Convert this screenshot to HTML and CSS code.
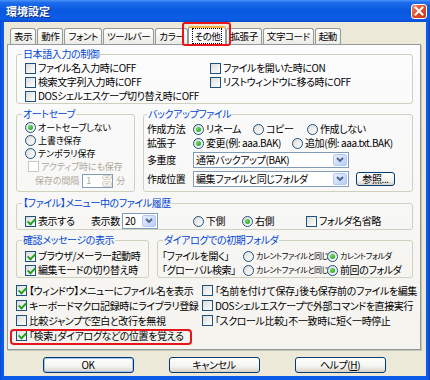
FILE: index.html
```html
<!DOCTYPE html>
<html lang="ja">

<head>
    <meta charset="UTF-8">
    <title>環境設定</title>
    <link rel="stylesheet" href="styles.css">
</head>

<body>
    <div class="window">
        <div class="titlebar">
            <span class="title">環境設定</span>
            <span class="close-btn">
                <svg width="10" height="10" viewBox="0 0 10 10">
                    <path d="M1.5 1.5 L8.5 8.5 M8.5 1.5 L1.5 8.5" stroke="#fff" stroke-width="2" stroke-linecap="square" />
                </svg>
            </span>
        </div>

        <div class="frame">
            <div class="client">
                <!-- Abas -->
                <div class="tabs">
                    <span class="tab">表示</span>
                    <span class="tab">動作</span>
                    <span class="tab">フォント</span>
                    <span class="tab">ツールバー</span>
                    <span class="tab">カラー</span>
                    <span class="tab active"><span class="focus">その他</span></span>
                    <span class="tab">拡張子</span>
                    <span class="tab">文字コード</span>
                    <span class="tab">起動</span>
                </div>

                <div class="panel">
                    <fieldset class="group">
                        <legend>日本語入力の制御</legend>
                        <div class="ime-grid">
                            <label class="chk"><span class="cb"></span>ファイル名入力時にOFF</label>
                            <label class="chk"><span class="cb"></span>ファイルを開いた時にON</label>
                            <label class="chk"><span class="cb"></span>検索文字列入力時にOFF</label>
                            <label class="chk"><span class="cb"></span>リストウィンドウに移る時にOFF</label>
                            <label class="chk"><span class="cb"></span>DOSシェルエスケープ切り替え時にOFF</label>
                        </div>
                    </fieldset>

                    <div class="split first">
                        <fieldset class="group autosave">
                            <legend>オートセーブ</legend>
                            <div class="autosave-body">
                                <label class="opt row13"><span class="rd on"></span>オートセーブしない</label>
                                <label class="opt row13"><span class="rd"></span>上書き保存</label>
                                <label class="opt row13"><span class="rd"></span>テンポラリ保存</label>
                                <label class="chk row13 dis indent"><span class="cb"></span>アクティブ時にも保存</label>
                                <div class="interval dis">
                                    <span>保存の間隔</span>
                                    <span class="spin">
                                        <span class="spin-text">1</span>
                                        <span class="spin-btns">
                                            <span class="spin-up"></span>
                                            <span class="spin-down"></span>
                                        </span>
                                    </span>
                                    <span>分</span>
                                </div>
                            </div>
                        </fieldset>

                        <fieldset class="group backup">
                            <legend>バックアップファイル</legend>
                            <div class="backup-body">
                                <div class="form-row">
                                    <span class="field-label">作成方法</span>
                                    <label class="opt w60"><span class="rd on"></span>リネーム</label>
                                    <label class="opt w54"><span class="rd"></span>コピー</label>
                                    <label class="opt"><span class="rd"></span>作成しない</label>
                                </div>
                                <div class="form-row">
                                    <span class="field-label">拡張子</span>
                                    <label class="opt w99"><span class="rd on"></span>変更(例: aaa.BAK)</label>
                                    <label class="opt"><span class="rd"></span>追加(例: aaa.txt.BAK)</label>
                                </div>
                                <div class="form-row select-row">
                                    <span class="field-label">多重度</span>
                                    <span class="select wide">
                                        <span class="select-text">通常バックアップ(BAK)</span>
                                        <span class="select-btn"><svg width="8" height="6" viewBox="0 0 8 6"><path d="M1 1 L4 4 L7 1" fill="none" stroke="#4d6185" stroke-width="1.8" /></svg></span>
                                    </span>
                                </div>
                                <div class="form-row select-row last">
                                    <span class="field-label">作成位置</span>
                                    <span class="select wide">
                                        <span class="select-text">編集ファイルと同じフォルダ</span>
                                        <span class="select-btn"><svg width="8" height="6" viewBox="0 0 8 6"><path d="M1 1 L4 4 L7 1" fill="none" stroke="#4d6185" stroke-width="1.8" /></svg></span>
                                    </span>
                                    <span class="btn small">参照...</span>
                                </div>
                            </div>
                        </fieldset>
                    </div>

                    <fieldset class="group history">
                        <legend>【ファイル】メニュー中のファイル履歴</legend>
                        <div class="history-body">
                            <label class="chk w66"><span class="cb on"></span>表示する</label>
                            <span class="w31">表示数</span>
                            <span class="w71">
                                <span class="select narrow">
                                    <span class="select-text">20</span>
                                    <span class="select-btn"><svg width="8" height="6" viewBox="0 0 8 6"><path d="M1 1 L4 4 L7 1" fill="none" stroke="#4d6185" stroke-width="1.8" /></svg></span>
                                </span>
                            </span>
                            <label class="opt w49"><span class="rd"></span>下側</label>
                            <label class="opt w64"><span class="rd on"></span>右側</label>
                            <label class="chk"><span class="cb"></span>フォルダ名省略</label>
                        </div>
                    </fieldset>

                    <div class="split">
                        <fieldset class="group confirm">
                            <legend>確認メッセージの表示</legend>
                            <div class="confirm-body">
                                <label class="chk"><span class="cb on"></span>ブラウザ/メーラー起動時</label>
                                <label class="chk"><span class="cb on"></span>編集モードの切り替え時</label>
                            </div>
                        </fieldset>

                        <fieldset class="group folders">
                            <legend>ダイアログでの初期フォルダ</legend>
                            <div class="folders-grid">
                                <span>「ファイルを開く」</span>
                                <label class="opt small-text"><span class="rd"></span>カレントファイルと同じ</label>
                                <label class="opt small-text"><span class="rd on"></span>カレントフォルダ</label>
                                <span>「グローバル検索」</span>
                                <label class="opt small-text"><span class="rd"></span>カレントファイルと同じ</label>
                                <label class="opt"><span class="rd on"></span>前回のフォルダ</label>
                            </div>
                        </fieldset>
                    </div>

                    <div class="misc-grid">
                        <label class="chk"><span class="cb on"></span>【ウィンドウ】メニューにファイル名を表示</label>
                        <label class="chk"><span class="cb"></span>「名前を付けて保存」後も保存前のファイルを編集</label>
                        <label class="chk"><span class="cb on"></span>キーボードマクロ記録時にライブラリ登録</label>
                        <label class="chk"><span class="cb"></span>DOSシェルエスケープで外部コマンドを直接実行</label>
                        <label class="chk"><span class="cb"></span>比較ジャンプで空白と改行を無視</label>
                        <label class="chk"><span class="cb"></span>「スクロール比較」不一致時に短く一時停止</label>
                        <label class="chk marked"><span class="cb on"></span>「検索」ダイアログなどの位置を覚える</label>
                    </div>
                </div>

                <div class="buttons">
                    <span class="btn default">OK</span>
                    <span class="btn">キャンセル</span>
                    <span class="btn">ヘルプ(<u>H</u>)</span>
                </div>
            </div>
        </div>
    </div>
</body>

</html>
```

FILE: styles.css
```css
/* Reset */
* {
    margin: 0;
    padding: 0;
    box-sizing: border-box;
}

body {
    width: 430px;
    height: 380px;
    overflow: hidden;
    font-family: "Noto Sans CJK JP", "Noto Sans", sans-serif;
    font-size: 10px;
    line-height: 12px;
    letter-spacing: -0.4px;
    font-feature-settings: "palt";
    color: #000;
    background: #fff;
}

.window {
    width: 430px;
    height: 380px;
    display: flex;
    flex-direction: column;
}

/* Barra de titulo */
.titlebar {
    height: 22px;
    display: flex;
    align-items: center;
    justify-content: space-between;
    padding: 0 3px 0 6px;
    background: linear-gradient(#4a93f8 0%, #1d6cec 12%, #0a58e0 45%, #0b5de6 85%, #0a4ccc 100%);
}

.title {
    color: #fff;
    font-weight: bold;
    font-size: 11px;
    letter-spacing: 0;
    text-shadow: 1px 1px 0 #0b2a80;
}

.close-btn {
    width: 16px;
    height: 15px;
    display: flex;
    align-items: center;
    justify-content: center;
    border: 1px solid #fff;
    border-radius: 3px;
    background: linear-gradient(135deg, #f09070 0%, #e2502a 45%, #c43a18 100%);
}

.frame {
    flex: 1;
    padding: 0 4px 4px;
    background: linear-gradient(90deg, #0a48d0, #0b5be8 2px, #0b5be8 calc(100% - 2px), #0a3cb8);
}

.client {
    height: 100%;
    display: flex;
    flex-direction: column;
    padding: 0 5px 0 3px;
    background: #ece9d8;
}

/* Abas */
.tabs {
    height: 22px;
    display: flex;
    align-items: flex-end;
    gap: 1px;
    padding-left: 3px;
}

.tab {
    height: 16px;
    padding: 0 3px;
    line-height: 15px;
    font-size: 9.5px;
    border: 1px solid #919b9c;
    border-bottom: none;
    border-radius: 3px 3px 0 0;
    background: linear-gradient(#ffffff, #ecebe6);
    white-space: nowrap;
}

.tab.active {
    position: relative;
    z-index: 1;
    height: 19px;
    margin: 0 -1px -1px;
    padding: 1px 4px 0;
    border-top: 2px solid #f5b33c;
    background: #fcfcfe;
}

.tab.active::after {
    content: "";
    position: absolute;
    left: -7px;
    right: -6px;
    top: -6px;
    bottom: -1px;
    border: 2px solid #e8141b;
    border-radius: 3px;
}

.focus {
    outline: 1px dotted #000;
    padding: 0 1px;
}

/* Painel */
.panel {
    padding: 3px 7px 6px 8px;
    border: 1px solid #919b9c;
    box-shadow: 1px 1px 0 #c8c6b8;
    background: linear-gradient(#fcfcfe, #f4f3ee);
}

.group {
    min-width: 0;
    padding: 0;
    border: 1px solid #d0d0bf;
    border-radius: 3px;
}

.group legend {
    margin-left: 5px;
    padding: 0 1px;
    line-height: 12px;
    color: #0046d5;
    white-space: nowrap;
}

.split {
    display: flex;
    gap: 8px;
    margin-top: 5px;
}

.split.first {
    margin-top: 4px;
}

.chk,
.opt {
    display: inline-flex;
    align-items: center;
    gap: 2px;
    white-space: nowrap;
}

/* Checkbox e radio estilo XP */
.cb {
    position: relative;
    flex: none;
    width: 11px;
    height: 11px;
    border: 1px solid #1c5180;
    background: linear-gradient(135deg, #dcdcd7, #ffffff);
}

.cb.on::after {
    content: "";
    position: absolute;
    left: 3px;
    top: 0;
    width: 3px;
    height: 6px;
    border: solid #21a121;
    border-width: 0 2px 2px 0;
    transform: rotate(45deg);
}

.rd {
    flex: none;
    width: 11px;
    height: 11px;
    display: flex;
    align-items: center;
    justify-content: center;
    border: 1px solid #1c5180;
    border-radius: 50%;
    background: linear-gradient(135deg, #dcdcd7, #ffffff);
}

.rd.on::after {
    content: "";
    width: 5px;
    height: 5px;
    border-radius: 50%;
    background: radial-gradient(circle at 35% 35%, #6ddc68, #0f9a10);
}

.dis {
    color: #aca899;
}

.dis .cb {
    border-color: #cac8bb;
    background: #fff;
}

/* Grupo 1 */
.ime-grid {
    display: grid;
    grid-template-columns: 185px auto;
    grid-auto-rows: 14px;
    align-items: center;
    padding: 1px 0 0 8px;
}

/* Auto save */
.autosave {
    width: 119px;
    flex: none;
}

.autosave-body {
    display: flex;
    flex-direction: column;
    padding: 1px 0 3px 8px;
    font-size: 9px;
    line-height: 11px;
    letter-spacing: -0.1px;
}

.row13 {
    height: 13px;
}

.indent {
    margin-left: 3px;
}

.interval {
    height: 15px;
    display: flex;
    align-items: center;
    gap: 3px;
    margin-left: 10px;
    white-space: nowrap;
}

.spin {
    width: 31px;
    height: 14px;
    display: flex;
    border: 1px solid #7f9db9;
    background: #fff;
}

.spin-text {
    flex: 1;
    padding-left: 3px;
    line-height: 12px;
}

.spin-btns {
    width: 11px;
    display: flex;
    flex-direction: column;
    gap: 1px;
    padding: 0 0 0 1px;
}

.spin-up,
.spin-down {
    flex: 1;
    display: flex;
    align-items: center;
    justify-content: center;
    border: 1px solid #d8d6cb;
    border-radius: 2px;
    background: #f5f4ea;
}

.spin-up::after {
    content: "";
    border: 2px solid transparent;
    border-bottom: 2px solid #c9c7ba;
    border-top: none;
}

.spin-down::after {
    content: "";
    border: 2px solid transparent;
    border-top: 2px solid #c9c7ba;
    border-bottom: none;
}

/* Backup */
.backup {
    flex: 1;
}

.backup legend {
    margin-left: 3px;
}

.backup-body {
    padding: 2px 0 4px 3px;
}

.form-row {
    height: 14px;
    display: flex;
    align-items: center;
    white-space: nowrap;
}

.select-row {
    height: 16px;
    margin-top: 2px;
}

.select-row.last {
    margin-top: 3px;
}

.field-label {
    width: 46px;
    flex: none;
}

.w60 { width: 60px; }
.w54 { width: 54px; }
.w99 { width: 99px; }
.w66 { width: 66px; }
.w31 { width: 31px; }
.w71 { width: 71px; }
.w49 { width: 49px; }
.w64 { width: 64px; }

.select {
    height: 16px;
    display: flex;
    align-items: center;
    padding: 0 1px;
    border: 1px solid #7f9db9;
    background: #fff;
}

.select.wide {
    width: 156px;
}

.select.narrow {
    width: 36px;
}

.select-text {
    flex: 1;
    padding-left: 1px;
    line-height: 14px;
    white-space: nowrap;
    overflow: hidden;
}

.select-btn {
    width: 14px;
    height: 12px;
    display: flex;
    align-items: center;
    justify-content: center;
    border: 1px solid #b4c8f4;
    border-radius: 2px;
    background: linear-gradient(135deg, #e8effd, #b8cdf7);
}

/* Historico */
.history {
    margin-top: 5px;
}

.history-body {
    height: 20px;
    display: flex;
    align-items: center;
    padding: 4px 0 0 8px;
    white-space: nowrap;
}

/* Confirmacao e pastas */
.history + .split {
    margin-top: 4px;
}

.confirm {
    width: 133px;
    flex: none;
}

.confirm-body {
    display: flex;
    flex-direction: column;
    padding: 3px 0 0 8px;
}

.confirm-body .chk {
    height: 14px;
}

.folders {
    flex: 1;
}

.folders-grid {
    display: grid;
    grid-template-columns: 81px 84px auto;
    grid-auto-rows: 14px;
    align-items: center;
    padding: 3px 0 0 4px;
    white-space: nowrap;
}

.small-text {
    font-size: 8px;
    letter-spacing: -0.5px;
}

/* Opcoes avulsas */
.misc-grid {
    display: grid;
    grid-template-columns: 186px auto;
    grid-auto-rows: 15px;
    align-items: center;
    justify-items: start;
    margin-top: 5px;
}

.marked {
    position: relative;
}

.marked::after {
    content: "";
    position: absolute;
    left: -6px;
    right: -8px;
    top: -1px;
    bottom: -3px;
    border: 2px solid #e8141b;
    border-radius: 4px;
}

/* Botoes */
.buttons {
    display: flex;
    justify-content: center;
    gap: 35px;
    margin-top: 7px;
}

.btn {
    width: 91px;
    height: 16px;
    display: flex;
    align-items: center;
    justify-content: center;
    border: 1px solid #003c74;
    border-radius: 3px;
    background: linear-gradient(#ffffff, #f3f3ef 60%, #d8d3c8);
    white-space: nowrap;
}

.btn.default {
    box-shadow: inset 0 0 0 1px #a9c4f3;
}

.btn.small {
    width: 39px;
    height: 14px;
    margin-left: 7px;
}
```
